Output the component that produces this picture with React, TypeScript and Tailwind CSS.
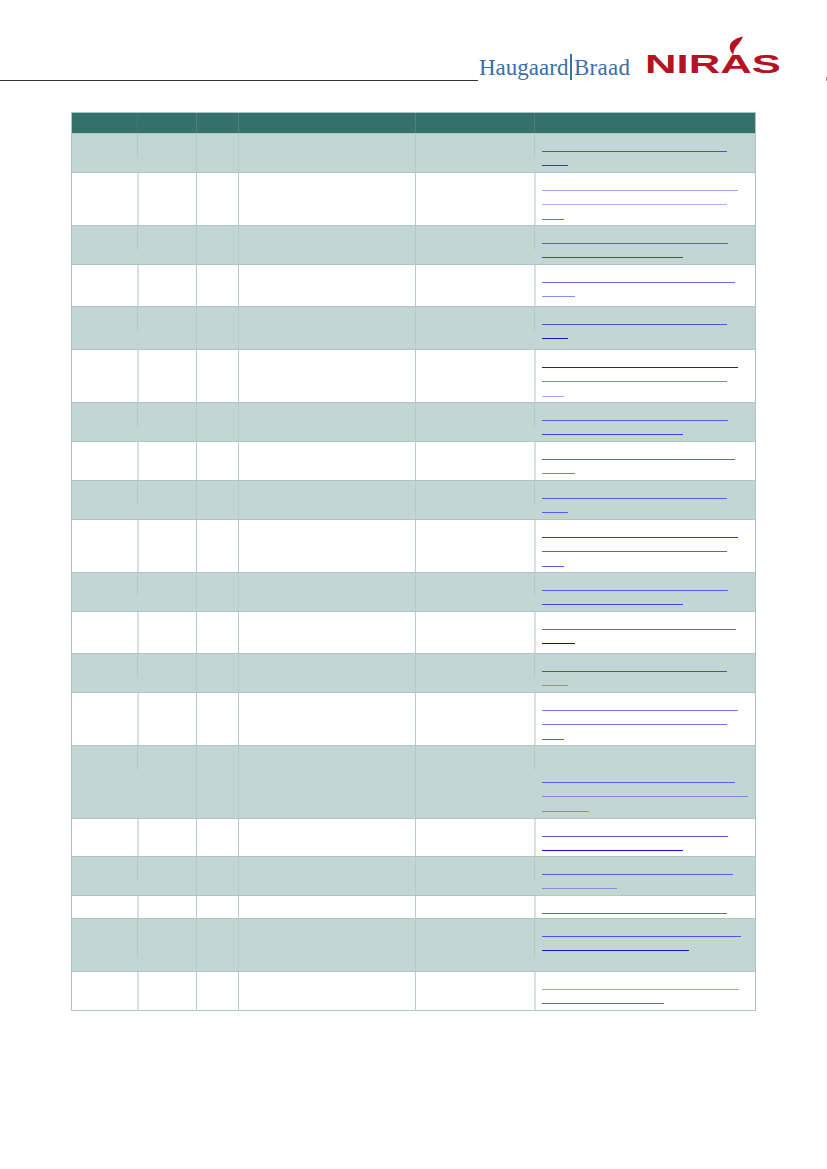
import React from "react";

type Row = {
  h: string;
  pt?: string;
  seg?: string;
  lines: string[];
};

// Each line string is the width + colour of one underlined (empty) link line.
const ROWS: Row[] = [
  { h: "h-[39px]", lines: ["w-[185px] bg-[#4b4bf2]", "w-[26px] bg-[#3434e6]"] },
  { h: "h-[53px]", lines: ["w-[196px] bg-[#a6a6ff]", "w-[185px] bg-[#b0b0ff]", "w-[22px] bg-[#6a6aee]"] },
  { h: "h-[39px]", lines: ["w-[186px] bg-[#5a5aff]", "w-[141px] bg-[#3c3cf5]"] },
  { h: "h-[42px]", lines: ["w-[193px] bg-[#6a6aff]", "w-[33px] bg-[#8c8cf5]"] },
  { h: "h-[43px]", lines: ["w-[185px] bg-[#4f4ff5]", "w-[26px] bg-[#1616cc]"] },
  { h: "h-[53px]", lines: ["w-[196px] bg-[#1c1cd6]", "w-[185px] bg-[#7a7aff]", "w-[22px] bg-[#a8a8ff]"] },
  { h: "h-[39px]", lines: ["w-[186px] bg-[#5a5aff]", "w-[141px] bg-[#3c3cf5]"] },
  { h: "h-[39px]", lines: ["w-[193px] bg-[#5a5aff]", "w-[33px] bg-[#7a7af0]"] },
  { h: "h-[39px]", lines: ["w-[185px] bg-[#5a5af5]", "w-[26px] bg-[#5a5af0]"] },
  { h: "h-[53px]", lines: ["w-[196px] bg-[#3232e8]", "w-[185px] bg-[#5a5aff]", "w-[22px] bg-[#5a5af0]"] },
  { h: "h-[39px]", lines: ["w-[186px] bg-[#5a5aff]", "w-[141px] bg-[#4646f0]"] },
  { h: "h-[42px]", lines: ["w-[194px] bg-[#5a5aff]", "w-[33px] bg-[#0a0acc]"] },
  { h: "h-[39px]", lines: ["w-[185px] bg-[#4848e8]", "w-[26px] bg-[#8a8ae6]"] },
  { h: "h-[53px]", lines: ["w-[196px] bg-[#7070ff]", "w-[185px] bg-[#7070ff]", "w-[22px] bg-[#5a5aee]"] },
  { h: "h-[73px]", pt: "pt-[22px]", lines: ["w-[193px] bg-[#5c5cf0]", "w-[206px] bg-[#8686e4]", "w-[47px] bg-[#8686e4]"] },
  { h: "h-[38px]", lines: ["w-[186px] bg-[#5a5ae8]", "w-[141px] bg-[#1010ff]"] },
  { h: "h-[39px]", lines: ["w-[191px] bg-[#5a5aff]", "w-[75px] bg-[#8a8ae0]"] },
  { h: "h-[23px]", lines: ["w-[185px] bg-[#5a5aff]"] },
  { h: "h-[53px]", seg: "h-[39px]", lines: ["w-[199px] bg-[#5252f0]", "w-[147px] bg-[#1616d2]"] },
  { h: "h-[39px]", lines: ["w-[197px] bg-[#a0a0ff]", "w-[122px] bg-[#5a5aff]"] },
];

function Flame() {
  return (
    <svg
      viewBox="0 0 16 20"
      className="absolute left-[84px] top-[-15px] h-[19px] w-[15px]"
      aria-hidden
    >
      <path
        d="M15 0.5 C6.5 2 1 6.5 0.8 11.5 C0.7 14.5 2.2 17.5 4.6 19.8 C5 16.2 5.8 13.2 8.2 10.6 C10.4 8.2 13 5.2 15 0.5 Z"
        fill="#b3141f"
      />
    </svg>
  );
}

function Header() {
  return (
    <div className="flex h-[81px] items-end">
      <div className="w-[478px] border-b border-[#333333]" />
      <div className="ml-[1px] flex items-end text-[#3b6ea5] [font-family:'Liberation_Serif',serif]">
        <span className="mb-[2px] text-[23px] leading-[22px]">Haugaard</span>
        <div className="mx-[2px] mb-[1px] h-[26px] w-[1.5px] bg-[#3b6ea5]" />
        <span className="mb-[2px] text-[23px] leading-[22px] tracking-[0.3px]">Braad</span>
      </div>
      <div className="relative mb-[2px] ml-[15px] h-[28px] w-[136px]">
        <span className="inline-block origin-left scale-x-[1.56] scale-y-[0.92] text-[28px] font-bold leading-[28px] text-[#b3141f] [font-family:'Liberation_Sans',sans-serif]">
          NIRAS
        </span>
        <Flame />
      </div>
      <div className="flex-1" />
      <div className="h-[4px] w-px bg-[#9a9a9a]" />
    </div>
  );
}

function HeadRow() {
  return (
    <div className="flex h-[22px] border-y border-[#a9c6c3] bg-[#36706a]">
      <div className="w-[66px] border-l border-[#a9c6c3]" />
      <div className="w-[59px] border-l border-[#3f7771]" />
      <div className="w-[42px] border-l border-[#4d827c]" />
      <div className="w-[177px] border-l border-[#4d827c]" />
      <div className="w-[119px] border-l border-[#4d827c]" />
      <div className="w-[222px] border-x border-l-[#4a7f79] border-r-[#a9c6c3]" />
    </div>
  );
}

// Left strip of the 2nd and 6th column: full light bar on white rows,
// only a short darker stub at the top on shaded rows.
function Strip({ shaded, seg }: { shaded: boolean; seg?: string }) {
  if (!shaded) return <div className="w-[2px] shrink-0 bg-[#d3e3e1]" />;
  return (
    <div className="w-[2px] shrink-0">
      <div className={`${seg ?? "h-[24px]"} w-px bg-[#b3cbc8]`} />
    </div>
  );
}

function BodyRow({ row, shaded }: { row: Row; shaded: boolean }) {
  return (
    <div
      className={`flex ${row.h} border-b border-[#adc7c4] ${shaded ? "bg-[#c4d6d4]" : "bg-white"}`}
    >
      <div className="w-[66px] border-l border-[#a9c4c1]" />
      <div className="flex w-[59px]">
        <Strip shaded={shaded} seg={row.seg} />
      </div>
      <div className="w-[42px] border-l border-[#b3cdca]" />
      <div className="w-[177px] border-l border-[#b3cdca]" />
      <div className="w-[119px] border-l border-[#b3cdca]" />
      <div className="flex w-[222px] border-r border-[#a9c4c1]">
        <Strip shaded={shaded} seg={row.seg} />
        <div className={`flex flex-col pl-[6px] ${row.pt ?? "pt-[3px]"}`}>
          {row.lines.map((cls, i) => (
            <div key={i} className="flex h-[14.7px] items-end">
              <div className={`h-px ${cls}`} />
            </div>
          ))}
        </div>
      </div>
    </div>
  );
}

export default function App() {
  return (
    <div className="h-[1169px] w-[827px] overflow-hidden bg-white">
      <Header />
      <div className="ml-[71px] mt-[31px] w-[685px]">
        <HeadRow />
        {ROWS.map((row, i) => (
          <BodyRow key={i} row={row} shaded={i % 2 === 0} />
        ))}
      </div>
    </div>
  );
}
